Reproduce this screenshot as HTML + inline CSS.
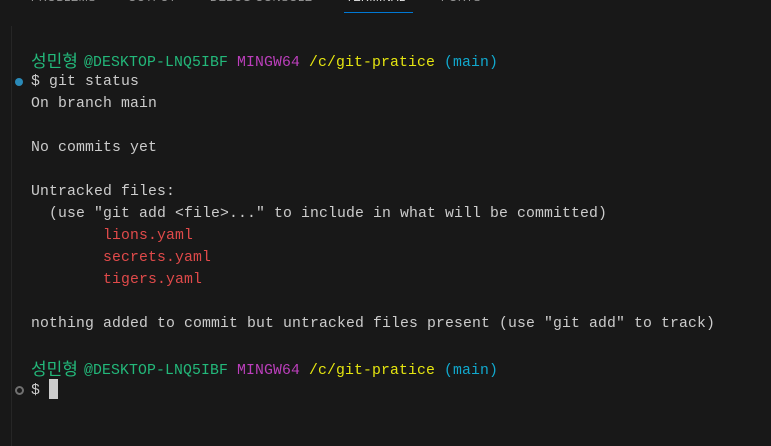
<!DOCTYPE html>
<html><head><meta charset="utf-8"><style>
html,body{margin:0;padding:0;width:771px;height:443px;overflow:hidden;background:#181818;}
.tabs{position:absolute;top:-8px;left:0;font-family:"Liberation Sans",sans-serif;font-size:11px;color:#9d9d9d;letter-spacing:.5px}
.tabs span{position:absolute;top:0;white-space:nowrap}
.ul{position:absolute;left:344px;top:12px;width:69px;height:1px;background:#0078d4}
.bar{position:absolute;left:11px;top:26px;width:1px;height:420px;background:#262626}
.term{position:absolute;left:31px;top:49px;font-family:"Liberation Mono","Noto Sans CJK KR",monospace;font-size:14.8px;letter-spacing:0.12px;line-height:22px;color:#cccccc;white-space:pre}
.l{height:22px}
.g{color:#23b87a}.m{color:#bc3fbc}.y{color:#e5e510}.b{color:#11a8cd}.r{color:#e04a4a}
.k{display:inline-block;width:53px;font-family:"Noto Sans CJK KR",sans-serif;font-size:17px;letter-spacing:0;vertical-align:-1px}
.dot{position:absolute;left:15px;width:8px;height:8px;border-radius:50%}
.cur{display:inline-block;width:9px;height:20px;background:#cccccc;vertical-align:-5px}
</style></head><body>
<div class="tabs"><span style="left:31px">PROBLEMS</span><span style="left:128px">OUTPUT</span><span style="left:210px">DEBUG CONSOLE</span><span style="left:346px;color:#e7e7e7">TERMINAL</span><span style="left:441px">PORTS</span></div>
<div class="ul"></div>
<div class="bar"></div>
<div class="dot" style="top:78px;background:#2a8ab8"></div>
<div class="dot" style="top:386px;border:2px solid #707070;width:5px;height:5px;left:15px"></div>
<div class="term"><div class="l"><span class="k g">성민형</span><span class="g">@DESKTOP-LNQ5IBF</span> <span class="m">MINGW64</span> <span class="y">/c/git-pratice</span> <span class="b">(main)</span></div><div class="l">$ git status</div><div class="l">On branch main</div><div class="l"></div><div class="l">No commits yet</div><div class="l"></div><div class="l">Untracked files:</div><div class="l">  (use "git add &lt;file&gt;..." to include in what will be committed)</div><div class="l r">        lions.yaml</div><div class="l r">        secrets.yaml</div><div class="l r">        tigers.yaml</div><div class="l"></div><div class="l">nothing added to commit but untracked files present (use "git add" to track)</div><div class="l"></div><div class="l"><span class="k g">성민형</span><span class="g">@DESKTOP-LNQ5IBF</span> <span class="m">MINGW64</span> <span class="y">/c/git-pratice</span> <span class="b">(main)</span></div><div class="l">$ <span class="cur"></span></div></div>
</body></html>
